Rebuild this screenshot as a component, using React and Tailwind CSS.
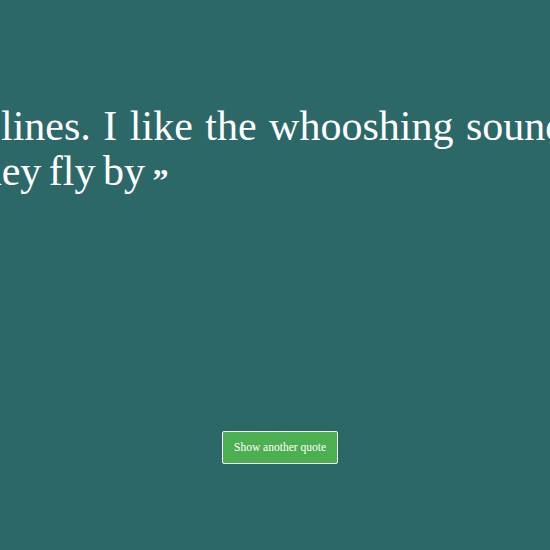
export default function App() {
  return (
    <div className="w-[550px] h-[550px] overflow-hidden bg-[#2d6868] text-white" style={{ fontFamily: '"Liberation Serif", "DejaVu Serif", serif' }}>
      <div className="pt-[104px] text-[42px] leading-[45px] whitespace-nowrap">
        <div className="ml-[1px] [word-spacing:2px]">lines. I like the whooshing sound they make as</div>
        <div className="-ml-[31px] [word-spacing:-3px]">
          they fly by <span className="font-bold text-[32px] align-[-6px]">”</span>
        </div>
      </div>
      <div className="mt-[228px] ml-[222px]">
        <button className="w-[116px] h-[33px] bg-[#4caf50] border border-white rounded-[2px] text-[11.5px] text-white">
          Show another quote
        </button>
      </div>
    </div>
  );
}
